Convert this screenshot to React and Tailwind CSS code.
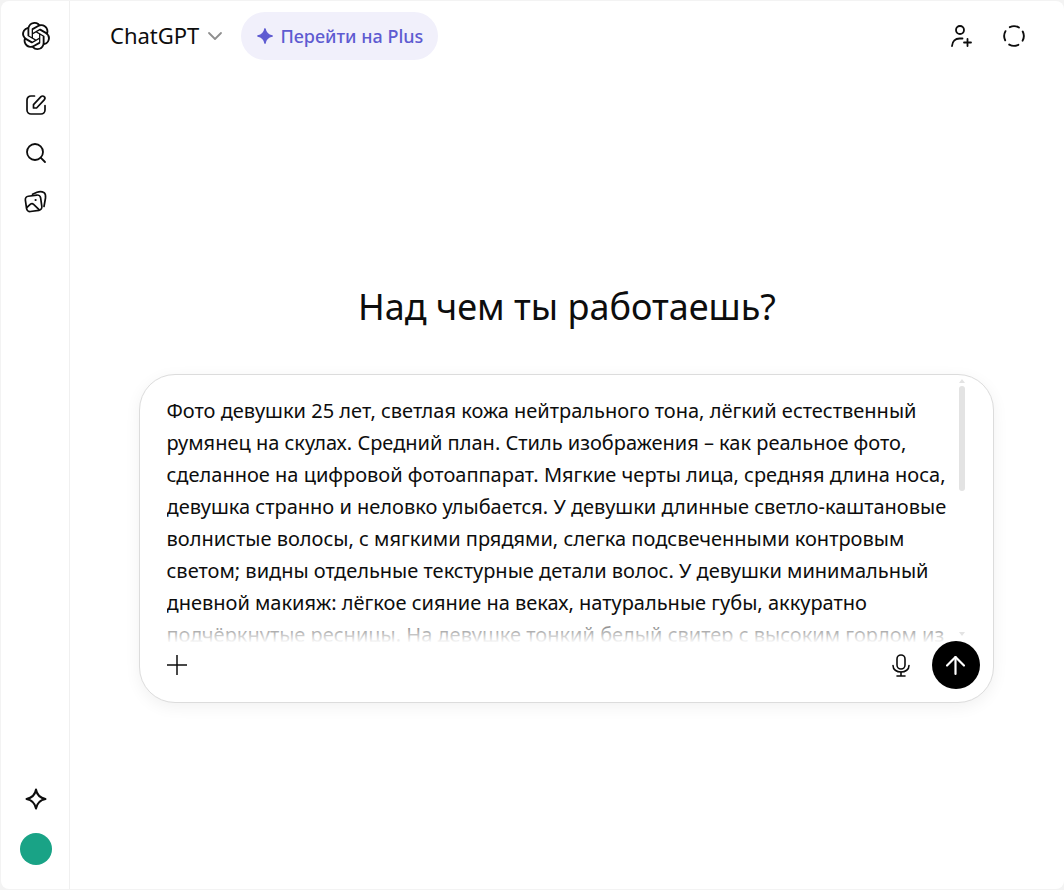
import React from "react";
import { SiOpenai } from "react-icons/si";
import { Search, ArrowUp, ChevronDown } from "lucide-react";

const lines = [
  "Фото девушки 25 лет, светлая кожа нейтрального тона, лёгкий естественный",
  "румянец на скулах. Средний план. Стиль изображения – как реальное фото,",
  "сделанное на цифровой фотоаппарат. Мягкие черты лица, средняя длина носа,",
  "девушка странно и неловко улыбается. У девушки длинные светло-каштановые",
  "волнистые волосы, с мягкими прядями, слегка подсвеченными контровым",
  "светом; видны отдельные текстурные детали волос. У девушки минимальный",
  "дневной макияж: лёгкое сияние на веках, натуральные губы, аккуратно",
  "подчёркнутые ресницы. На девушке тонкий белый свитер с высоким горлом из",
];

function Edit() {
  return (
    <svg width="24" height="24" viewBox="0 0 24 24" fill="none" stroke="#0d0d0d" strokeWidth="1.7" strokeLinecap="round" strokeLinejoin="round">
      <path d="M10.500 3H7A4 4 0 0 0 3 7v10a4 4 0 0 0 4 4h10a4 4 0 0 0 4-4v-4.500" />
      <path d="M9.500 15v-3.300L17 3.700a2.200 2.200 0 0 1 3.200 0 2.200 2.200 0 0 1 0 3.100L12.600 15H9.500Z" />
    </svg>
  );
}

function Images() {
  return (
    <svg width="24" height="24" viewBox="0 0 24 24" fill="none" stroke="#0d0d0d" strokeWidth="1.7" strokeLinecap="round" strokeLinejoin="round">
      <rect x="1.900" y="6.600" width="15.400" height="15.400" rx="3.400" transform="rotate(-8 9.600 14.300)" />
      <path d="M8.500 5.200l4.500-2c2.500-.8 5.500-.5 7.200.5 1.500 1 1.500 3 1.300 5.300l-1.500 8.500" />
      <path d="M2.800 18.500l3.700-3.300c1-.8 2.200-.7 3.100.1l5.200 5" />
      <circle cx="11.600" cy="11" r="1.100" fill="#0d0d0d" stroke="none" />
    </svg>
  );
}

function UserPlus() {
  return (
    <svg width="24" height="24" viewBox="0 0 24 24" fill="none" stroke="#0d0d0d" strokeWidth="1.8" strokeLinecap="round">
      <circle cx="11" cy="6" r="4" />
      <path d="M3 22c.3-4.700 3.500-7.500 7.500-7.500h3" />
      <path d="M18.500 15v7M15 18.500h7" />
    </svg>
  );
}

function Dashed() {
  return (
    <svg width="24" height="24" viewBox="0 0 24 24" fill="none" stroke="#0d0d0d" strokeWidth="1.900" strokeLinecap="round">
      <circle cx="12" cy="12" r="9.800" strokeDasharray="9.400 6" transform="rotate(-27 12 12)" />
    </svg>
  );
}

function Sparkle({ className, fill, stroke, strokeWidth }) {
  return (
    <svg className={className} viewBox="0 0 24 24" fill={fill} stroke={stroke} strokeWidth={strokeWidth} strokeLinejoin="round">
      <path d="M12 2.500c.9 5.400 3.600 8.300 9.500 9.500-5.900 1.200-8.600 4.100-9.500 9.500-.9-5.400-3.600-8.300-9.500-9.500 5.900-1.200 8.600-4.100 9.500-9.500Z" />
    </svg>
  );
}

function PlusThin() {
  return (
    <svg width="20" height="20" viewBox="0 0 20 20" fill="none" stroke="#0d0d0d" strokeWidth="1.500">
      <path d="M10 0v20M0 10h20" />
    </svg>
  );
}

function MicIcon() {
  return (
    <svg width="18" height="23" viewBox="0 0 18 23" fill="none" stroke="#0d0d0d" strokeWidth="1.600" strokeLinecap="round">
      <rect x="5" y="1" width="8" height="14" rx="4" />
      <path d="M1 11.500c0 4 3.500 6.500 8 6.500s8-2.500 8-6.500" />
      <path d="M9 18v4M5 22h8" />
    </svg>
  );
}

export default function App() {
  return (
    <div className="w-[1064px] h-[890px] bg-[#f3f3f3] overflow-hidden" style={{ fontFamily: '"Noto Sans", sans-serif' }}>
      <div className="w-[1063px] h-[888px] ml-px mt-px bg-white rounded-lg flex text-[#0d0d0d]">
        <aside className="w-[69px] shrink-0 pl-[2px] border-r border-[#f0f0f0] flex flex-col items-center">
          <div className="mt-[21px] h-7 flex items-center justify-center">
            <SiOpenai className="w-[28px] h-[28px] text-[#0d0d0d]" />
          </div>
          <div className="mt-[43px] flex flex-col items-center gap-6">
            <Edit />
            <Search size={24} strokeWidth={1.8} color="#0d0d0d" />
            <Images />
          </div>
          <div className="mt-auto mb-[24px] flex flex-col items-center gap-[22px]">
            <Sparkle className="w-6 h-6" fill="none" stroke="#0d0d0d" strokeWidth="2" />
            <div className="w-8 h-8 rounded-full bg-[#19a386]" />
          </div>
        </aside>
        <main className="flex-1 min-w-0 flex flex-col">
          <header className="h-[70px] shrink-0 flex items-center pl-10 pr-[38px]">
            <div className="flex items-center">
              <span className="text-[22px] leading-[30px] pb-[2px] text-[#0d0d0d]">ChatGPT</span>
              <ChevronDown size={24} strokeWidth={1.800} color="#8f8f8f" className="ml-[4px]" />
            </div>
            <div className="ml-[14px] h-12 w-[197px] rounded-full bg-[#f1f0fb] flex items-center justify-center gap-[6px] text-[#5e5bd1] text-[18px] font-medium">
              <Sparkle className="w-[18px] h-[18px]" fill="#5e5bd1" stroke="#5e5bd1" strokeWidth="2" />
              <span>Перейти на Plus</span>
            </div>
            <div className="ml-auto flex items-center gap-[29px]">
              <UserPlus />
              <Dashed />
            </div>
          </header>
          <div className="flex-1 flex flex-col items-center">
            <h1 className="mt-[211px] text-[36px] leading-[50px] font-normal text-[#0d0d0d]">Над чем ты работаешь?</h1>
            <div className="relative mt-[42px] mr-[2px] w-[855px] h-[329px] rounded-[36px] border border-[#dcdcdc] bg-white shadow-[0_4px_16px_rgba(0,0,0,0.06)] overflow-hidden">
              <div className="absolute left-[27px] top-[20px] h-[247px] overflow-hidden text-[20px] leading-[32px] text-[#0d0d0d] whitespace-nowrap">
                {lines.map((l) => (
                  <div key={l}>{l}</div>
                ))}
              </div>
              <div className="absolute left-0 right-0 top-[240px] h-[28px] bg-gradient-to-b from-white/20 to-white" />
              <div className="absolute right-[28px] top-[11px] w-[6px] h-[105px] rounded-full bg-[#e3e3e3]" />
              <div className="absolute right-[28px] top-[4px] w-0 h-0 border-x-[3px] border-x-transparent border-b-[4px] border-b-[#e3e3e3]" />
              <div className="absolute right-[28px] top-[257px] w-0 h-0 border-x-[3px] border-x-transparent border-t-[4px] border-t-[#e3e3e3]" />
              <div className="absolute left-[27px] top-[280px]">
                <PlusThin />
              </div>
              <div className="absolute right-[83px] top-[279px]">
                <MicIcon />
              </div>
              <div className="absolute right-[13px] top-[266px] w-12 h-12 rounded-full bg-black flex items-center justify-center">
                <ArrowUp size={29} strokeWidth={1.800} color="#fff" />
              </div>
            </div>
          </div>
        </main>
      </div>
    </div>
  );
}
